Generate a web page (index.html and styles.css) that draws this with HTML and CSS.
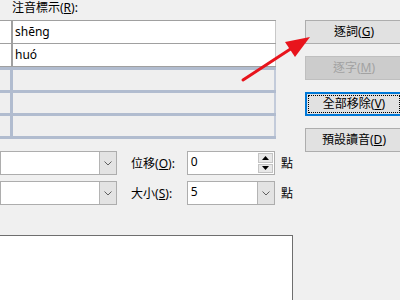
FILE: index.html
```html
<!DOCTYPE html>
<html lang="zh-Hant">
<head>
  <meta charset="UTF-8">
  <title>注音標示</title>
  <link rel="stylesheet" href="styles.css">
</head>
<body>
  <div class="dlg">
    <div class="pane">
      <div class="cap">注音標示(<u>R</u>):</div>
      <div class="grid">
        <div class="row"><div class="c0"></div><div class="c1">shēng</div></div>
        <div class="row"><div class="c0"></div><div class="c1">huó</div></div>
        <div class="row off"><div class="c0"></div><div class="c1"></div></div>
        <div class="row off"><div class="c0"></div><div class="c1"></div></div>
        <div class="row off last"><div class="c0"></div><div class="c1"></div></div>
      </div>
    </div>

    <div class="btns">
      <div class="btn">逐詞(<u>G</u>)</div>
      <div class="btn dis">逐字(<u>M</u>)</div>
      <div class="btn focus">全部移除(<u>V</u>)</div>
      <div class="btn">預設讀音(<u>D</u>)</div>
    </div>

    <div class="opts">
      <div class="orow">
        <div class="combo"><div class="drop"><svg width="8" height="5" viewBox="0 0 8 5"><path d="M0.5 0.5 L4 4 L7.5 0.5" fill="none" stroke="#606060" stroke-width="1"/></svg></div></div>
        <div class="lbl">位移(<u>O</u>):</div>
        <div class="field">
          <span class="val">0</span>
          <div class="spin">
            <div class="sb"><svg width="7" height="4" viewBox="0 0 7 4"><path d="M0 4 L3.5 0 L7 4 Z" fill="#000"/></svg></div>
            <div class="sb"><svg width="7" height="4" viewBox="0 0 7 4"><path d="M0 0 L3.5 4 L7 0 Z" fill="#000"/></svg></div>
          </div>
        </div>
        <div class="unit">點</div>
      </div>
      <div class="orow">
        <div class="combo"><div class="drop"><svg width="8" height="5" viewBox="0 0 8 5"><path d="M0.5 0.5 L4 4 L7.5 0.5" fill="none" stroke="#606060" stroke-width="1"/></svg></div></div>
        <div class="lbl">大小(<u>S</u>):</div>
        <div class="field">
          <span class="val">5</span>
          <div class="drop"><svg width="8" height="5" viewBox="0 0 8 5"><path d="M0.5 0.5 L4 4 L7.5 0.5" fill="none" stroke="#606060" stroke-width="1"/></svg></div>
        </div>
        <div class="unit">點</div>
      </div>
    </div>

    <div class="preview"></div>

    <!-- red pointer arrow -->
    <svg class="arrow" width="90" height="60" viewBox="0 0 90 60">
      <line x1="13" y1="50" x2="62" y2="18" stroke="#e8141c" stroke-width="3" stroke-linecap="round"/>
      <path d="M80 7 L65 27 L55 12 Z" fill="#e8141c"/>
    </svg>
  </div>
</body>
</html>
```

FILE: styles.css
```css
body {
  margin: 0;
  width: 400px;
  height: 300px;
  overflow: hidden;
  background: #f0f0f0;
  font-family: "Noto Sans", "Noto Sans CJK TC", sans-serif;
  font-size: 12px;
  color: #000;
}
u {
  text-decoration-thickness: 1px;
  text-underline-offset: 1px;
}
.dlg {
  position: relative;
  display: grid;
  grid-template-columns: 293px 98px;
  column-gap: 12px;
  align-items: start;
}
.pane {
  grid-column: 1;
  grid-row: 1;
  width: 276px;
}
.cap {
  height: 18px;
  padding: 2px 0 0 12px;
  line-height: 12px;
}
.grid {
  border-top: 1px solid #a0a0a0;
}
.row {
  display: flex;
  height: 22px;
  background: #fff;
  border-bottom: 1px solid #a0a0a0;
}
.row .c0 {
  width: 11px;
  border-right: 2px solid #a0a0a0;
}
.row .c1 {
  flex: 1;
  padding-left: 2px;
  line-height: 22px;
  border-right: 1px solid #c8c8c8;
}
.row.off {
  height: 20px;
  background: #efefef;
  border-bottom: none;
  border-top: 3px solid #b1bccf;
}
.row.off.last {
  border-bottom: 3px solid #b1bccf;
}
.row.off .c0 {
  border-right: 3px solid #b1bccf;
  width: 10px;
}
.row.off .c1 {
  border-right: 2px solid #c3cbda;
}
.btns {
  grid-column: 2;
  grid-row: 1 / span 2;
  padding-top: 20px;
  display: flex;
  flex-direction: column;
  gap: 12px;
}
.btn {
  box-sizing: border-box;
  height: 24px;
  border: 1px solid #adadad;
  background: #e1e1e1;
  text-align: center;
  line-height: 22px;
}
.btn.dis {
  background: #cccccc;
  border-color: #bfbfbf;
  color: #a2a2a2;
}
.btn.focus {
  border: 2px solid #0078d7;
  line-height: 20px;
  outline: 1px dotted #000;
  outline-offset: -4px;
}
.opts {
  grid-column: 1;
  grid-row: 2;
  margin-top: 12px;
  display: flex;
  flex-direction: column;
  gap: 6px;
}
.orow {
  display: flex;
  align-items: center;
  height: 24px;
}
.combo {
  box-sizing: border-box;
  width: 118px;
  height: 24px;
  border: 1px solid #adadad;
  background: #fff;
  display: flex;
  justify-content: flex-end;
}
.drop {
  width: 16px;
  background: #e3e3e3;
  border-left: 1px solid #b4b4b4;
  display: flex;
  align-items: center;
  justify-content: center;
}
.lbl {
  width: 56px;
  margin-left: 14px;
}
.field {
  box-sizing: border-box;
  width: 89px;
  height: 24px;
  border: 1px solid #adadad;
  background: #fff;
  display: flex;
}
.val {
  flex: 1;
  padding-left: 3px;
  line-height: 20px;
}
.spin {
  width: 15px;
  margin: 1px 1px 1px 0;
  display: flex;
  flex-direction: column;
  gap: 1px;
}
.sb {
  flex: 1;
  background: #e8e8e8;
  border: 1px solid #c4c4c4;
  display: flex;
  align-items: center;
  justify-content: center;
}
.unit {
  margin-left: 6px;
}
.preview {
  grid-column: 1;
  grid-row: 3;
  margin-top: 30px;
  width: 292px;
  height: 64px;
  background: #fff;
  border-top: 1px solid #6e6e6e;
  border-right: 1px solid #6e6e6e;
}
.arrow {
  position: absolute;
  left: 230px;
  top: 30px;
}
```
